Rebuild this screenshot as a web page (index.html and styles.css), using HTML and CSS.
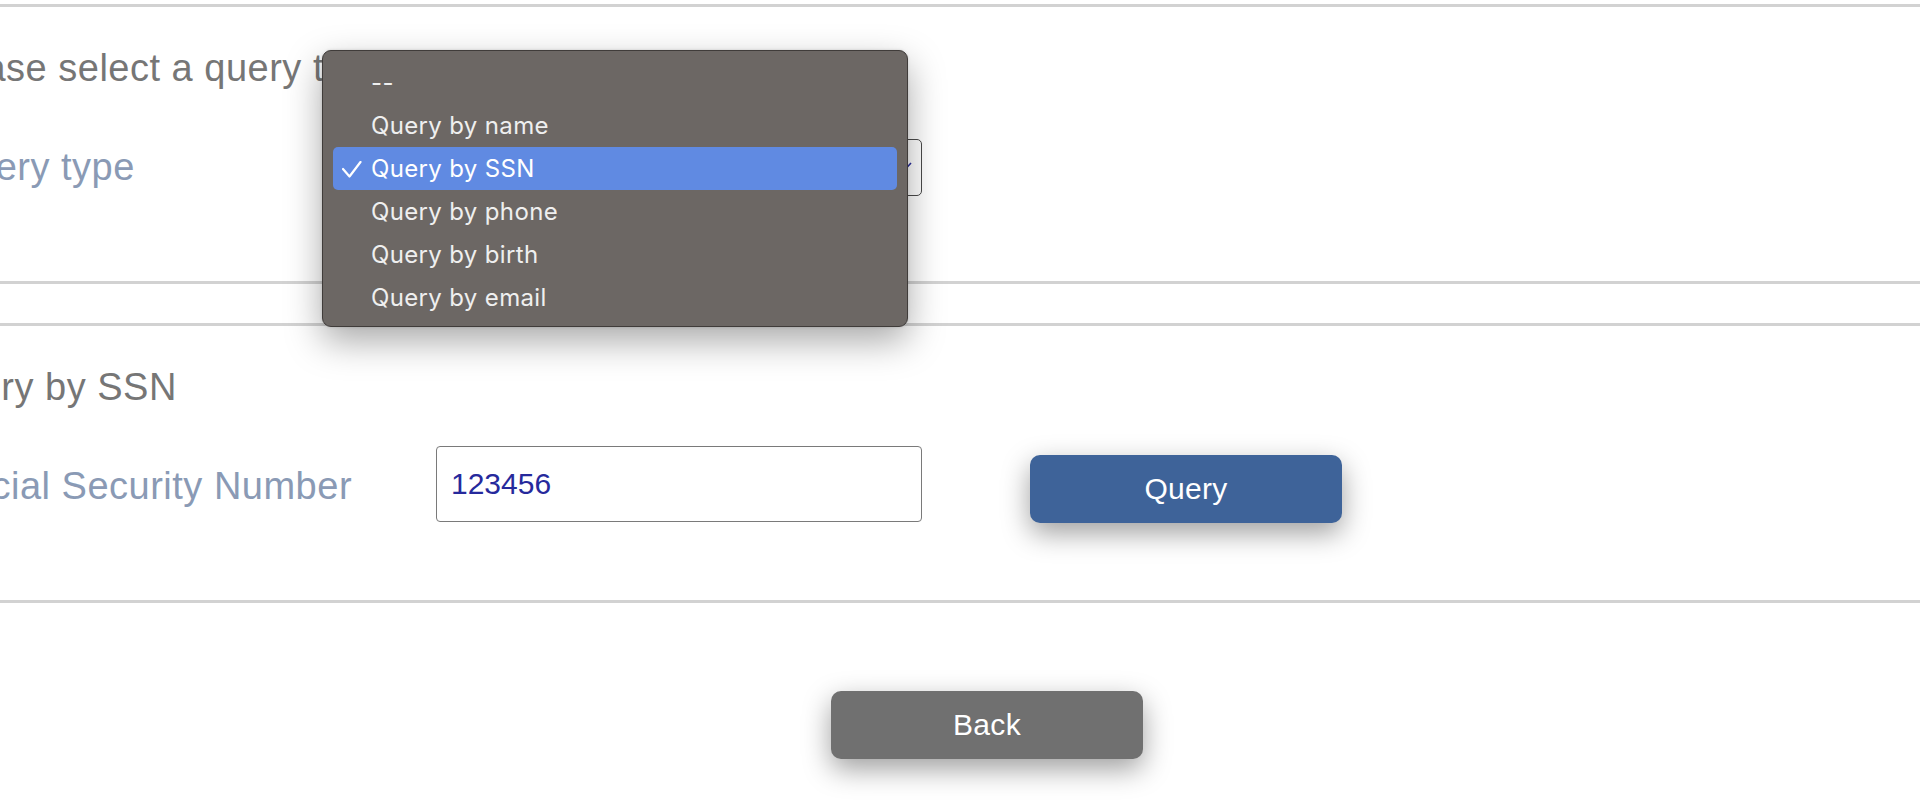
FILE: index.html
```html
<!DOCTYPE html>
<html lang="en">
<head>
<meta charset="utf-8">
<title>Query</title>
<link rel="stylesheet" href="styles.css">
</head>
<body>
<main class="page">
  <section class="panel">
    <div class="panel-body">
      <h2 class="panel-title">Please select a query type</h2>
      <div class="field-row">
        <label class="field-label">Query type</label>
        <div class="select-box">
          <span class="select-value">Query by SSN</span>
          <svg class="select-chevron" width="18" height="12" viewBox="0 0 18 12"><polyline points="2,2 9,9.5 16,2" fill="none" stroke="#2a2e9e" stroke-width="1.6"/></svg>
        </div>
      </div>
    </div>
  </section>

  <section class="panel">
    <div class="panel-body">
      <h2 class="panel-title">Query by SSN</h2>
      <div class="field-row">
        <label class="field-label" for="ssn">Social Security Number</label>
        <input id="ssn" class="text-input" type="text" value="123456">
        <button class="btn btn-primary" type="button">Query</button>
      </div>
    </div>
  </section>

  <div class="actions">
    <button class="btn btn-back" type="button">Back</button>
  </div>
</main>

<div class="popup-menu">
  <div class="menu-item">--</div>
  <div class="menu-item">Query by name</div>
  <div class="menu-item is-selected">
    <svg class="menu-check" width="20" height="17" viewBox="0 0 20 17"><polyline points="1,8 7.5,15.5 18.5,1" fill="none" stroke="#ffffff" stroke-width="2.2" stroke-linecap="round" stroke-linejoin="round"/></svg>
    Query by SSN
  </div>
  <div class="menu-item">Query by phone</div>
  <div class="menu-item">Query by birth</div>
  <div class="menu-item">Query by email</div>
</div>
</body>
</html>
```

FILE: styles.css
```css
html, body {
  margin: 0;
  padding: 0;
  background: #ffffff;
  height: 800px;
  overflow: hidden;
}

body {
  font-family: "Liberation Sans", Arial, sans-serif;
  position: relative;
}

.page {
  padding-top: 4px;
}

.panel {
  border-top: 3px solid #d2d2d2;
  border-bottom: 3px solid #d2d2d2;
  padding: 39px 0 64px;
}

.panel + .panel {
  margin-top: 39px;
}

.panel-body {
  margin-left: -72px;
}

.panel-title {
  margin: 0;
  font-size: 38px;
  line-height: 44px;
  letter-spacing: 0.5px;
  font-weight: normal;
  color: #767676;
  white-space: nowrap;
}

.field-row {
  margin-top: 27px;
  height: 100px;
  display: flex;
  align-items: center;
}

.field-label {
  box-sizing: border-box;
  flex: 0 0 508px;
  padding-left: 16px;
  font-size: 38px;
  line-height: 44px;
  letter-spacing: 0.5px;
  color: #8a9ab5;
  white-space: nowrap;
}

.select-box {
  box-sizing: border-box;
  width: 486px;
  height: 57px;
  border: 1px solid #4a4a4a;
  border-radius: 5px;
  background: #ffffff;
  display: flex;
  align-items: center;
  justify-content: space-between;
  padding: 0 8px 0 14px;
  font-size: 28px;
  color: #2a2e9e;
}

.select-chevron {
  display: block;
}

.text-input {
  box-sizing: border-box;
  width: 486px;
  height: 76px;
  margin-bottom: 5px;
  border: 1.5px solid #7a7a7a;
  border-radius: 4px;
  padding: 0 14px;
  font-family: "Liberation Sans", Arial, sans-serif;
  font-size: 30px;
  color: #26299c;
  background: #ffffff;
  outline: none;
}

.btn {
  box-sizing: border-box;
  width: 312px;
  height: 68px;
  border: none;
  border-radius: 10px;
  font-family: "Liberation Sans", Arial, sans-serif;
  font-size: 30px;
  letter-spacing: 0.3px;
  color: #ffffff;
  box-shadow: 0 10px 28px rgba(0, 0, 0, 0.38);
  cursor: pointer;
}

.btn-primary {
  background: #3e6399;
  margin-left: 108px;
  margin-top: 5px;
}

.btn-back {
  background: #707070;
}

.actions {
  display: flex;
  justify-content: center;
  padding-left: 54px;
  margin-top: 88px;
}

.popup-menu {
  position: absolute;
  left: 322px;
  top: 50px;
  box-sizing: border-box;
  width: 586px;
  height: 277px;
  padding: 9.5px 10px 8px;
  background: #6c6764;
  border: 1px solid #403c3a;
  border-radius: 9px;
  box-shadow: 0 14px 36px rgba(0, 0, 0, 0.34), 0 0 3px rgba(0, 0, 0, 0.15);
  font-family: Inter, "Noto Sans", sans-serif;
  font-size: 24px;
  letter-spacing: 0.35px;
  color: #efefef;
}

.menu-item {
  position: relative;
  height: 43px;
  line-height: 43px;
  padding-left: 38px;
  border-radius: 5px;
  white-space: nowrap;
}

.menu-item.is-selected {
  background: #608ae2;
  color: #ffffff;
}

.menu-check {
  position: absolute;
  left: 9px;
  top: 14px;
}
```
